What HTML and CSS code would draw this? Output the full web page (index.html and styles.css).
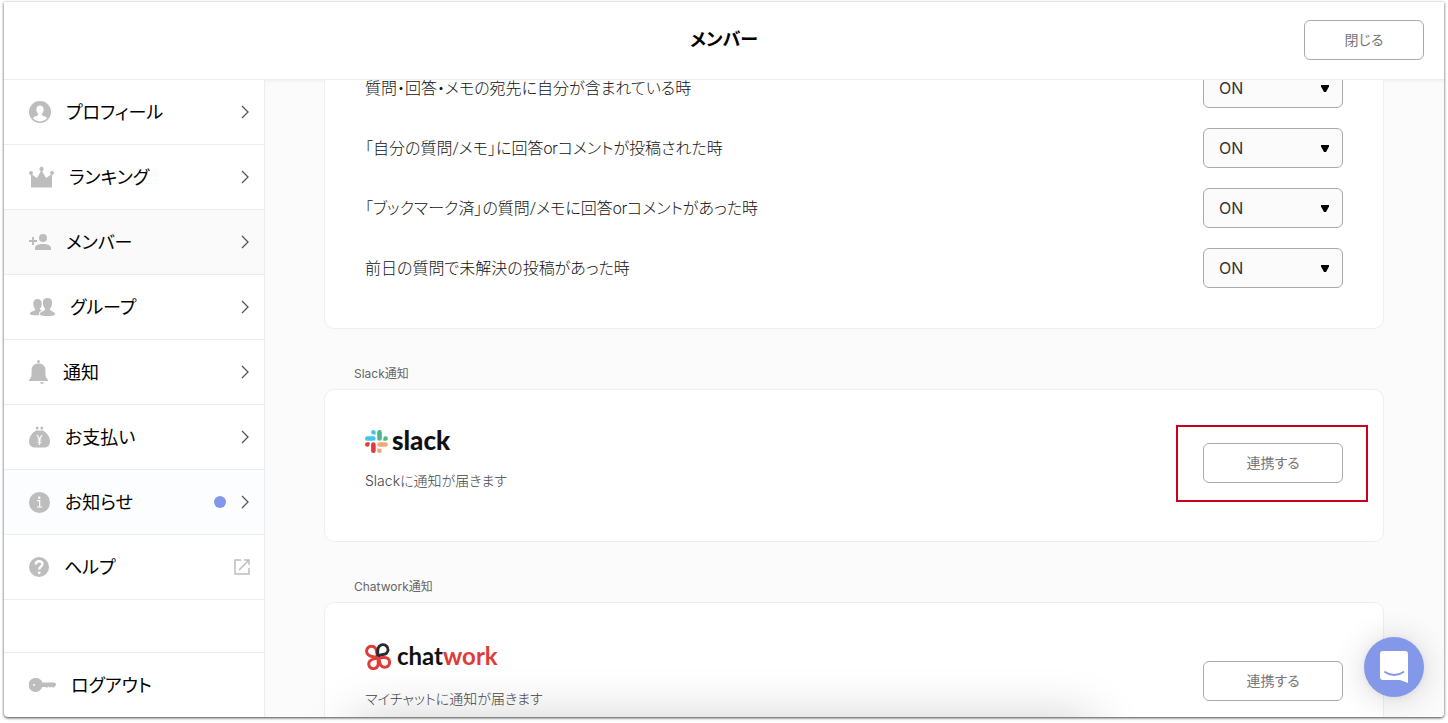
FILE: index.html
```html
<!DOCTYPE html>
<html lang="ja">
<head>
<meta charset="utf-8">
<meta name="viewport" content="width=device-width, initial-scale=1">
<title>メンバー</title>
<link rel="stylesheet" href="styles.css">
</head>
<body>
<div class="window">
  <header class="header">
    <h1 class="title">メンバー</h1>
    <button class="button button-close" type="button">閉じる</button>
  </header>
  <div class="body">
    <nav class="sidebar">
      <a class="item" href="#">
        <svg class="icon" width="22" height="22" viewBox="0 0 22 22"><circle cx="11" cy="11" r="11"/><path class="cut" d="M11 4.600c-2.200 0-3.600 1.500-3.600 3.900 0 1.700.6 3.100 1.600 3.900v1.600c-.3 1-3.600 1.200-5.200 3.100a9.500 9.500 0 0 0 14.400 0c-1.600-1.900-4.900-2.100-5.200-3.100v-1.600c1-.8 1.600-2.200 1.600-3.900 0-2.400-1.400-3.900-3.600-3.900z"/></svg>
        <span class="label">プロフィール</span>
        <svg class="chevron" width="8" height="14" viewBox="0 0 8 14"><path d="M1 1l6 6-6 6"/></svg>
      </a>
      <a class="item" href="#">
        <svg class="icon" width="25" height="22" viewBox="0 0 25 22"><path d="M2 21.500V8l6 4 4.500-8L17 12l6-4v13.500z"/><circle cx="2" cy="7" r="2"/><circle cx="12.500" cy="3" r="2.200"/><circle cx="23" cy="7" r="2"/></svg>
        <span class="label">ランキング</span>
        <svg class="chevron" width="8" height="14" viewBox="0 0 8 14"><path d="M1 1l6 6-6 6"/></svg>
      </a>
      <a class="item item-current" href="#" aria-current="page">
        <svg class="icon" width="22" height="16" viewBox="0 0 22 16"><circle cx="14" cy="4" r="4"/><path d="M6 16v-2c0-2.700 4-4 8-4s8 1.300 8 4v2zM3 3h2v3h3v2H5v3H3V8H0V6h3z"/></svg>
        <span class="label">メンバー</span>
        <svg class="chevron" width="8" height="14" viewBox="0 0 8 14"><path d="M1 1l6 6-6 6"/></svg>
      </a>
      <a class="item" href="#">
        <svg class="icon icon-group" width="25" height="18" viewBox="0 0 25 18"><path d="M7.500 1C4.800 1 3.300 2.800 3.300 5.500c0 2.400.8 4.200 2 5.500-.1 2.900-5.300 1.700-5.300 4.700 0 1.100 2.500 1.600 5 1.600 1.600 0 3.500 0 4.300-.5-1.100-2.300 1.200-3.500 3-4.300-1.500-.4-2.700-.7-2.600-1.500C11 9.700 11.700 8 11.700 5.500 11.700 2.800 10.200 1 7.500 1z"/><path d="M17.500 0c-3 0-4.600 1.900-4.600 4.800 0 2.600.9 4.500 2.200 5.900 0 3.500-5.300 2-5.300 5.500 0 1.300 4 1.800 7.600 1.800s7.600-.5 7.600-1.800c0-3.500-5.100-2-5.100-5.500 1.300-1.400 2.200-3.300 2.200-5.900 0-2.900-1.600-4.800-4.600-4.800z"/></svg>
        <span class="label">グループ</span>
        <svg class="chevron" width="8" height="14" viewBox="0 0 8 14"><path d="M1 1l6 6-6 6"/></svg>
      </a>
      <a class="item" href="#">
        <svg class="icon" width="19" height="24" viewBox="0 0 19 24"><circle cx="9.500" cy="1.500" r="1.500"/><path d="M0 21v-1c1.800-1.300 2.600-3.500 2.600-7V10c0-4 2.700-6.500 6.900-6.500S16.400 6 16.400 10v3c0 3.500.8 5.700 2.600 7v1zM11 22.200h4c-.3 1.100-1 1.700-2 1.700s-1.700-.6-2-1.700z"/></svg>
        <span class="label">通知</span>
        <svg class="chevron" width="8" height="14" viewBox="0 0 8 14"><path d="M1 1l6 6-6 6"/></svg>
      </a>
      <a class="item" href="#">
        <svg class="icon" width="21" height="22" viewBox="0 0 21 22"><circle cx="8.200" cy="2" r="1.500"/><circle cx="12.800" cy="2" r="1.500"/><path d="M7 4.500h7c4 2.400 7 6.300 7 11 0 4-2.700 6-6.500 6h-8C2.700 21.500 0 19.500 0 15.500 0 10.800 3 6.900 7 4.500z"/><path class="stroke-cut" d="M8 9l2.500 4L13 9M10.500 13v6M8.500 14h4M8.500 16.500h4"/></svg>
        <span class="label">お支払い</span>
        <svg class="chevron" width="8" height="14" viewBox="0 0 8 14"><path d="M1 1l6 6-6 6"/></svg>
      </a>
      <a class="item item-news" href="#">
        <svg class="icon" width="21" height="22" viewBox="0 0 21 22"><circle cx="10.500" cy="11.500" r="10.500"/><circle class="cut" cx="10.300" cy="6.800" r="1.200"/><path class="stroke-cut" d="M8 9.700h2.700v6M8 16h5.300"/></svg>
        <span class="label">お知らせ</span>
        <span class="dot"></span>
        <svg class="chevron" width="8" height="14" viewBox="0 0 8 14"><path d="M1 1l6 6-6 6"/></svg>
      </a>
      <a class="item" href="#">
        <svg class="icon" width="20" height="20" viewBox="0 0 20 20"><circle cx="10" cy="10" r="10"/><path class="question" d="M6.800 7.500c0-2 1.400-3.300 3.300-3.300s3.300 1.200 3.300 2.900c0 2.500-3.200 2.700-3.200 5.400"/><circle class="cut" cx="10.200" cy="15.800" r="1.400"/></svg>
        <span class="label">ヘルプ</span>
        <svg class="external" width="16" height="16" viewBox="0 0 16 16"><path d="M7 1H1v14h14V9M10 1h5v5M15 1L5 11"/></svg>
      </a>
      <a class="item item-logout" href="#">
        <svg class="icon" width="27" height="14" viewBox="0 0 27 14"><path fill-rule="evenodd" d="M7 0a7 7 0 0 1 6.400 4.500H25a2.300 2.300 0 0 1 2 2.500l-2 2.500h-1.500l-1-1-1.500 1.200-1.500-1.200-1.500 1.200L16.500 9h-3.300A7 7 0 1 1 7 0zM5 6a1 1 0 1 0 0 2 1 1 0 0 0 0-2z"/></svg>
        <span class="label">ログアウト</span>
      </a>
    </nav>
    <main class="content">
      <section class="card card-settings">
        <div class="setting"><label class="setting-label" for="s1">質問・回答・メモの宛先に自分が含まれている時</label><select class="select" id="s1"><option>ON</option><option>OFF</option></select></div>
        <div class="setting"><label class="setting-label" for="s2">「自分の質問/メモ」に回答orコメントが投稿された時</label><select class="select" id="s2"><option>ON</option><option>OFF</option></select></div>
        <div class="setting"><label class="setting-label" for="s3">「ブックマーク済」の質問/メモに回答orコメントがあった時</label><select class="select" id="s3"><option>ON</option><option>OFF</option></select></div>
        <div class="setting"><label class="setting-label" for="s4">前日の質問で未解決の投稿があった時</label><select class="select" id="s4"><option>ON</option><option>OFF</option></select></div>
      </section>
      <h2 class="heading">Slack通知</h2>
      <section class="card card-service">
        <div class="service">
          <div class="logo logo-slack">
            <svg width="23" height="23" viewBox="0 0 54 54"><path fill="#44c5f0" d="M19.700 0a5.400 5.400 0 1 0 0 10.800h5.400V5.400A5.400 5.400 0 0 0 19.700 0m0 14.400H5.400a5.400 5.400 0 1 0 0 10.800h14.300a5.400 5.400 0 1 0 0-10.800"/><path fill="#48b98a" d="M53.800 19.800a5.400 5.400 0 1 0-10.800 0v5.400h5.400a5.400 5.400 0 0 0 5.400-5.400m-14.300 0V5.400a5.400 5.400 0 1 0-10.800 0v14.400a5.400 5.400 0 1 0 10.800 0"/><path fill="#f0a878" d="M34.100 54a5.400 5.400 0 1 0 0-10.800h-5.400v5.400a5.400 5.400 0 0 0 5.400 5.400m0-14.400h14.300a5.400 5.400 0 1 0 0-10.800H34.100a5.400 5.400 0 1 0 0 10.800"/><path fill="#e23b3f" d="M0 34.200a5.400 5.400 0 1 0 10.800 0v-5.400H5.400A5.400 5.400 0 0 0 0 34.200m14.300 0v14.400a5.400 5.400 0 1 0 10.800 0V34.200a5.400 5.400 0 1 0-10.800 0"/></svg>
            <span class="wordmark">slack</span>
          </div>
          <p class="note">Slackに通知が届きます</p>
        </div>
        <div class="action action-marked"><button class="button" type="button">連携する</button></div>
      </section>
      <h2 class="heading">Chatwork通知</h2>
      <section class="card card-service">
        <div class="service">
          <div class="logo logo-chatwork">
            <svg width="27" height="27" viewBox="0 0 27 27" fill="none" stroke-width="3"><g stroke="#e03c38"><path d="M13.500 15C11 12.500 12.200 9 11.200 6.800A4.900 4.900 0 1 0 3.500 12C6 14.500 9.500 13 13.500 15"/><path d="M13.500 15C10 15.500 6.500 15.800 4.600 18.300a4.700 4.700 0 1 0 8.200 4.500C14 20 12.500 17.500 13.500 15"/><path d="M13.500 15c1.500 2.500.5 5.500 2.500 7.500a4.900 4.900 0 1 0 6.500-7.200C19.500 13.500 16.500 15 13.500 15"/></g><path stroke="#2b2b2b" d="M13 13C12.500 10 12 5.500 14.500 3a4.900 4.900 0 1 1 6.800 7.500c-2 1.500-5 .5-8.300 2.500"/></svg>
            <span class="wordmark">chat<b>work</b></span>
          </div>
          <p class="note">マイチャットに通知が届きます</p>
        </div>
        <div class="action action-low"><button class="button" type="button">連携する</button></div>
      </section>
      <div class="edge-shadow"></div>
    </main>
  </div>
  <button class="chat" type="button" aria-label="チャット">
    <svg width="30" height="34" viewBox="0 0 30 34"><path fill="#fff" d="M4 1h22a3 3 0 0 1 3 3v29l-8-3H4a3 3 0 0 1-3-3V4a3 3 0 0 1 3-3z"/><path fill="none" stroke="#8398e8" stroke-width="1.800" stroke-linecap="round" d="M6 22c5.500 4 13 4 18.500 0"/></svg>
  </button>
</div>
</body>
</html>
```

FILE: styles.css
```css
* { box-sizing: border-box; }
html, body { height: 100%; }
body {
  margin: 0;
  padding: 2px 4px 6px;
  background: #fff;
  color: #222;
  font-family: Inter, "Noto Sans CJK JP", sans-serif;
  font-feature-settings: "palt";
  font-size: 16px;
}
button, select { font: inherit; font-feature-settings: inherit; }
.window {
  position: relative;
  display: flex;
  flex-direction: column;
  height: 100%;
  border-radius: 0 0 4px 4px;
  background: #fff;
  box-shadow: 0 1px 3px rgba(0, 0, 0, .75);
  overflow: hidden;
}
.header {
  display: grid;
  grid-template-columns: 1fr auto 1fr;
  align-items: center;
  flex: none;
  height: 78px;
  padding: 0 20px 2px;
  border-bottom: 1px solid #ececec;
}
.title { grid-column: 2; margin: 0; font-size: 18px; line-height: 24px; font-weight: 700; color: #000; }
.button {
  width: 140px;
  height: 40px;
  padding: 0 0 2px;
  border: 1px solid #aaa;
  border-radius: 6px;
  background: #fff;
  color: #777;
  font-size: 14px;
}
.button-close { justify-self: end; width: 120px; }
.body { display: flex; flex: 1; min-height: 0; }
.sidebar {
  display: flex;
  flex-direction: column;
  flex: none;
  width: 261px;
  border-right: 1px solid #ececec;
}
.item {
  display: flex;
  align-items: center;
  flex: none;
  height: 65px;
  padding: 0 15px 0 25px;
  border-bottom: 1px solid #ececec;
  color: #000;
  font-size: 18px;
  text-decoration: none;
}
.item-current { background: #fafafa; }
.item-news { background: #fcfdff; }
.item-logout { margin-top: auto; border-top: 1px solid #ececec; border-bottom: 0; }
.icon { fill: #bdbdbd; }
.icon-group { margin-left: 1px; }
.cut { fill: #fff; }
.stroke-cut { fill: none; stroke: #fff; stroke-width: 1.2; }
.question { fill: none; stroke: #fff; stroke-width: 2.4; }
.label { flex: 1; margin-left: 15px; padding-bottom: 2px; }
.chevron { fill: none; stroke: #555; stroke-width: 1.3; }
.dot { width: 12px; height: 12px; margin-right: 15px; border-radius: 50%; background: #8398e8; }
.external { margin-right: -1px; fill: none; stroke: #bdbdbd; stroke-width: 1.5; }
.content {
  position: relative;
  flex: 1;
  min-width: 0;
  padding: 0 60px 0 59px;
  background: #fbfbfb;
  box-shadow: inset 0 3px 4px -3px rgba(0, 0, 0, .08);
  overflow: hidden;
}
.card { border: 1px solid #eee; border-radius: 10px; background: #fff; }
.card-settings {
  display: flex;
  flex-direction: column;
  gap: 20px;
  margin-top: -53px;
  padding: 40px;
}
.setting { display: flex; align-items: center; justify-content: space-between; }
.setting-label {
  padding-top: 2px;
  color: #111;
  font-family: Roboto, "Noto Sans CJK JP", sans-serif;
  font-weight: 300;
  line-height: 16px;
}
.select {
  appearance: none;
  width: 140px;
  height: 40px;
  padding: 0 15px;
  border: 1px solid #aaa;
  border-radius: 6px;
  background: #fbfbfb url("data:image/svg+xml,%3Csvg xmlns='http://www.w3.org/2000/svg' width='8' height='7'%3E%3Cpath d='M0 0h8v1.500L5 7H3L0 1.500z'/%3E%3C/svg%3E") no-repeat right 13px center;
  color: #333;
  font-weight: 400;
}
.heading {
  margin: 0;
  padding: 37px 30px 7px;
  color: #666;
  font-size: 12px;
  font-weight: 400;
  line-height: 16px;
}
.card-service { display: flex; align-items: center; justify-content: space-between; padding: 40px 40px 45px; }
.logo { display: flex; align-items: center; color: #111; font-family: Lato, sans-serif; }
.logo-slack { gap: 4px; height: 22px; font-size: 26px; font-weight: 900; }
.logo-chatwork { gap: 5px; height: 27px; font-size: 24px; font-weight: 700; }
.wordmark { padding-bottom: 3px; }
.logo b { color: #e03c38; font-weight: 700; }
.note { margin: 14px 0 0; color: #444; font-size: 14px; font-weight: 300; line-height: 30px; }
.action-marked {
  margin: -20px -25px -20px 0;
  padding: 16px 23px 17px 25px;
  border: 2px solid #c8001e;
}
.action-low { margin-top: 5px; }
.edge-shadow {
  position: absolute;
  top: 100%;
  left: 88px;
  right: 350px;
  height: 60px;
  box-shadow: 0 0 50px rgba(0, 0, 0, .18);
}
.chat {
  position: absolute;
  right: 20px;
  bottom: 20px;
  display: grid;
  place-items: center;
  width: 60px;
  height: 60px;
  padding: 0;
  border: 0;
  border-radius: 50%;
  background: #8398e8;
  box-shadow: 0 1px 6px rgba(0, 0, 0, .06), 0 2px 32px rgba(0, 0, 0, .16);
}
```
